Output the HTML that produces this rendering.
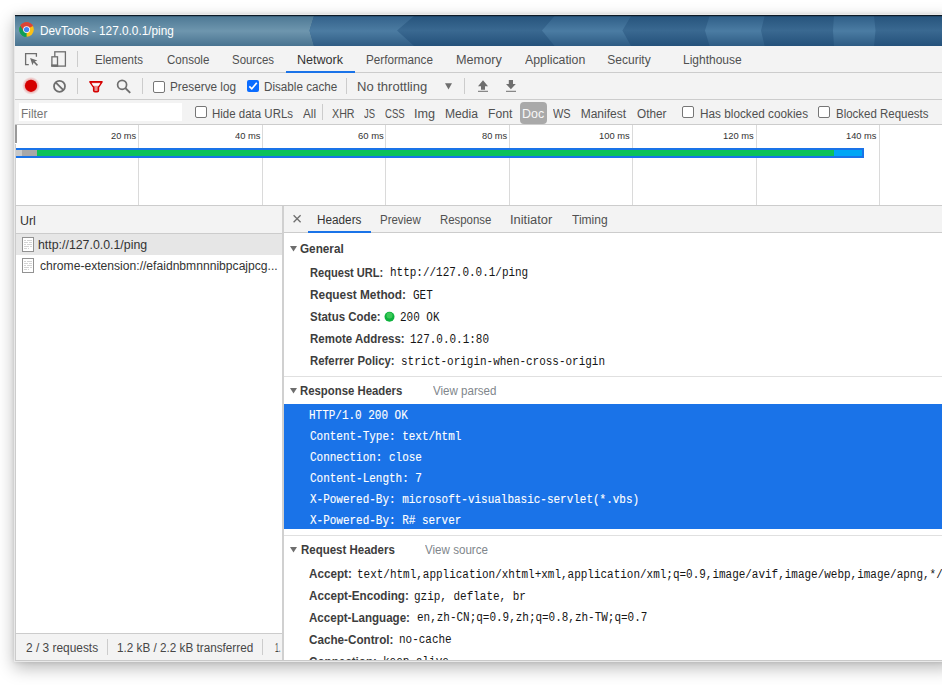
<!DOCTYPE html>
<html><head><meta charset="utf-8">
<style>
html,body{margin:0;padding:0}
body{width:942px;height:685px;overflow:hidden;background:#fff;position:relative;font-family:"Liberation Sans",sans-serif}
.a{position:absolute}
.t{position:absolute;white-space:pre;line-height:normal;transform-origin:0 0}
.hl{position:absolute;height:1px;background:#cccccc}
.vl{position:absolute;width:1px;background:#cccccc}
.cb{position:absolute;width:10px;height:10px;border:1px solid #767676;border-radius:2px;background:#fff}
</style></head><body>
<!-- window shadow -->
<div class="a" style="left:14px;top:14px;width:940px;height:648px;background:#e9e9e9;box-shadow:0 6px 16px rgba(0,0,0,0.28),0 0 4px rgba(0,0,0,0.12)"></div>
<!-- title bar -->
<svg class="a" style="left:15px;top:15px" width="927" height="31" viewBox="15 15 927 31">
<defs>
<linearGradient id="gL" x1="0" y1="0" x2="0" y2="1"><stop offset="0" stop-color="#4d7894"/><stop offset="0.5" stop-color="#6e96ae"/><stop offset="1" stop-color="#497390"/></linearGradient>
<linearGradient id="gM" x1="0" y1="0" x2="0" y2="1"><stop offset="0" stop-color="#33618a"/><stop offset="0.5" stop-color="#4c7ca2"/><stop offset="1" stop-color="#2f5c84"/></linearGradient>
<linearGradient id="gD" x1="0" y1="0" x2="0" y2="1"><stop offset="0" stop-color="#25527b"/><stop offset="0.5" stop-color="#3a6991"/><stop offset="1" stop-color="#24517a"/></linearGradient>
<linearGradient id="gB" x1="0" y1="0" x2="0" y2="1"><stop offset="0" stop-color="#2f5e87"/><stop offset="0.5" stop-color="#4b7ca3"/><stop offset="1" stop-color="#2d5b83"/></linearGradient>
</defs>
<rect x="15" y="15" width="927" height="31" fill="url(#gD)"/>
<polygon points="15,16 314,16 309.5,30.5 314,46 15,46" fill="url(#gL)"/>
<polygon points="314,16 414,16 397,30.5 414,46 314,46 309.5,30.5" fill="url(#gM)"/>
<polygon points="554.6,16 631,16 622.4,30.5 631,46 554.6,46 542,30.5" fill="url(#gB)"/>
<polygon points="709.6,16 764.6,16 761,30.5 764.6,46 709.6,46 705,30.5" fill="url(#gB)"/>
<polygon points="834,16 874,16 875.5,30.5 874,46 834,46 833,30.5" fill="url(#gB)"/>
<rect x="15" y="15" width="927" height="1.2" fill="#0d1a26"/>
<!-- chrome icon -->
<g transform="translate(26.6,29.6) scale(0.95)">
<circle r="7.6" fill="#fbc116"/>
<path d="M0,0 L-6.6,-3.8 A7.6,7.6 0 0 1 6.6,-3.8 Z" fill="#db4437"/>
<path d="M0,0 L-6.6,-3.8 A7.6,7.6 0 0 0 0,7.6 Z" fill="#0f9d58"/>
<path d="M0,0 L6.6,-3.8 L3.3,-1.9 Z" fill="#db4437"/>
<path d="M-6.6,-3.8 L-3.3,1.9 L0,-3.5 L6.6,-3.8 A7.6,7.6 0 0 0 -6.6,-3.8Z" fill="#db4437"/>
<path d="M-6.6,-3.8 L-1.7,4.8 L0,7.6 A7.6,7.6 0 0 1 -6.6,-3.8Z" fill="#0f9d58"/>
<circle r="3.6" fill="#fff"/>
<circle r="2.8" fill="#4285f4"/>
</g>
</svg>
<!-- toolbar background -->
<div class="a" style="left:15px;top:46px;width:927px;height:79px;background:#f3f3f3"></div>
<div class="hl" style="left:15px;top:72px;width:927px"></div>
<div class="hl" style="left:15px;top:99px;width:927px"></div>
<div class="hl" style="left:15px;top:124px;width:927px"></div>
<!-- network tab underline -->
<div class="a" style="left:286px;top:71px;width:69px;height:2px;background:#1a73e8"></div>
<!-- separators -->
<div class="vl" style="left:77px;top:51px;height:16px"></div>
<div class="vl" style="left:77px;top:78px;height:16px"></div>
<div class="vl" style="left:142px;top:78px;height:16px"></div>
<div class="vl" style="left:346px;top:78px;height:16px"></div>
<div class="vl" style="left:464px;top:78px;height:16px"></div>
<div class="vl" style="left:322px;top:104px;height:16px"></div>
<!-- icons row1 -->
<svg class="a" style="left:15px;top:46px" width="70" height="26" viewBox="15 46 70 26">
<path d="M28.8,64.6 H25.6 V53.6 H36.4 V56.8" fill="none" stroke="#6e6e6e" stroke-width="1.3"/>
<path d="M30.1,58.1 L37.3,60.4 L34.8,61.5 L38,64.8 L36.9,65.9 L33.6,62.6 L32.5,65.2 Z" fill="#6e6e6e"/>
<rect x="54.8" y="51.8" width="10.6" height="14.3" fill="none" stroke="#6e6e6e" stroke-width="1.3"/>
<rect x="51.9" y="56.8" width="5.6" height="9.3" fill="#f3f3f3" stroke="#6e6e6e" stroke-width="1.3"/>
<rect x="51.3" y="64.4" width="6.8" height="2.2" fill="#6e6e6e"/>
</svg>
<!-- icons row2 -->
<svg class="a" style="left:15px;top:73px" width="510" height="26" viewBox="15 73 510 26">
<defs><radialGradient id="glow"><stop offset="0.6" stop-color="#d50000" stop-opacity="0.35"/><stop offset="1" stop-color="#d50000" stop-opacity="0"/></radialGradient></defs><circle cx="31" cy="85.8" r="9" fill="url(#glow)"/>
<circle cx="31" cy="85.8" r="6.1" fill="#d50000"/>
<circle cx="59.5" cy="86.3" r="5.5" fill="none" stroke="#6e6e6e" stroke-width="1.8"/>
<path d="M55.6,82.4 L63.4,90.2" stroke="#6e6e6e" stroke-width="1.8"/>
<path d="M89.9,81.9 H102 L98.4,87.4 V90.6 Q98.4,91.8 97.2,91.8 H94.9 Q93.7,91.8 93.7,90.6 V87.4 Z" fill="#e89090" stroke="#d50000" stroke-width="1.6" stroke-linejoin="round"/>
<path d="M91.6,83.2 H100.3 L98.6,85.8 H93.3Z" fill="#fff"/>
<circle cx="122.1" cy="84.8" r="4.5" fill="none" stroke="#6e6e6e" stroke-width="1.7"/>
<path d="M125.4,88.1 L130.2,92.9" stroke="#6e6e6e" stroke-width="2"/>
<path d="M445,83.2 H452 L448.5,89.6Z" fill="#6e6e6e"/>
<path d="M483,80.2 L488,86.2 H485 V89.7 H481 V86.2 H478Z" fill="#6e6e6e"/>
<rect x="478" y="90.8" width="10" height="1" fill="#6e6e6e"/>
<path d="M508.8,80 H513 V84 H515.8 L510.9,89.2 L506,84 H508.8Z" fill="#6e6e6e"/>
<rect x="506" y="90.8" width="10" height="1" fill="#6e6e6e"/>
</svg>
<!-- checkboxes row2 -->
<div class="cb" style="left:153px;top:81px"></div>
<div class="a" style="left:247px;top:80px;width:12px;height:12px;border-radius:2px;background:#0b6cff"></div>
<svg class="a" style="left:247px;top:80px" width="12" height="12"><path d="M2.3,6.3 L4.8,8.8 L9.8,2.8" fill="none" stroke="#fff" stroke-width="1.7"/></svg>
<!-- filter row -->
<div class="a" style="left:19px;top:103px;width:163px;height:18px;background:#fff"></div>
<div class="cb" style="left:195px;top:106px"></div>
<div class="cb" style="left:682px;top:106px"></div>
<div class="cb" style="left:818px;top:106px"></div>
<div class="a" style="left:520px;top:102px;width:27px;height:22px;border-radius:4px;background:#a9a9a9"></div>
<!-- timeline -->
<div class="a" style="left:15px;top:125px;width:927px;height:80px;background:#fff"></div>
<div class="vl" style="left:138px;top:125px;height:80px;background:#dadada"></div>
<div class="vl" style="left:262px;top:125px;height:80px;background:#dadada"></div>
<div class="vl" style="left:385px;top:125px;height:80px;background:#dadada"></div>
<div class="vl" style="left:509px;top:125px;height:80px;background:#dadada"></div>
<div class="vl" style="left:632px;top:125px;height:80px;background:#dadada"></div>
<div class="vl" style="left:756px;top:125px;height:80px;background:#dadada"></div>
<div class="vl" style="left:879px;top:125px;height:80px;background:#dadada"></div>
<div class="a" style="left:15px;top:125px;width:2px;height:18px;background:#9a9a9a"></div>
<div class="a" style="left:15px;top:144px;width:1px;height:61px;background:#cfcfcf"></div>
<!-- waterfall bar -->
<div class="a" style="left:16px;top:148px;width:848px;height:10px;background:#1a73e8"></div>
<div class="a" style="left:16px;top:150px;width:6px;height:6px;background:#c8c8c8"></div>
<div class="a" style="left:22px;top:150px;width:15px;height:6px;background:#a8a8a8"></div>
<div class="a" style="left:37px;top:150px;width:797px;height:6px;background:#0cc15a"></div>
<div class="a" style="left:834px;top:150px;width:28px;height:6px;background:#00a6f5"></div>
<div class="hl" style="left:15px;top:205px;width:927px"></div>
<!-- lower area -->
<div class="a" style="left:15px;top:206px;width:927px;height:454px;background:#fff"></div>
<!-- left panel -->
<div class="a" style="left:15px;top:206px;width:267px;height:27px;background:#f3f3f3"></div>
<div class="hl" style="left:15px;top:233px;width:267px"></div>
<div class="a" style="left:15px;top:234px;width:267px;height:21px;background:#e6e6e6"></div>
<svg class="a" style="left:15px;top:234px" width="30" height="42" viewBox="15 234 30 42">
<g fill="#fff" stroke="#929292" stroke-width="1"><rect x="22.5" y="237.5" width="11" height="14"/><rect x="22.5" y="258.5" width="11" height="14"/></g>
<g fill="#d4d4d4"><rect x="24" y="240" width="2" height="1"/><rect x="27" y="240" width="5" height="1"/><rect x="24" y="242" width="4" height="1"/><rect x="29" y="242" width="3" height="1"/><rect x="24" y="244" width="2" height="1"/><rect x="27" y="244" width="5" height="1"/><rect x="24" y="246" width="5" height="1"/><rect x="30" y="246" width="2" height="1"/><rect x="24" y="248" width="3" height="1"/><rect x="28" y="248" width="1" height="1"/><rect x="24" y="261" width="2" height="1"/><rect x="27" y="261" width="5" height="1"/><rect x="24" y="263" width="4" height="1"/><rect x="29" y="263" width="3" height="1"/><rect x="24" y="265" width="2" height="1"/><rect x="27" y="265" width="5" height="1"/><rect x="24" y="267" width="5" height="1"/><rect x="30" y="267" width="2" height="1"/><rect x="24" y="269" width="3" height="1"/><rect x="28" y="269" width="1" height="1"/></g>
</svg>
<div class="a" style="left:15px;top:633px;width:267px;height:27px;background:#f3f3f3"></div>
<div class="hl" style="left:15px;top:633px;width:267px"></div>
<div class="vl" style="left:107px;top:639px;height:16px"></div>
<div class="vl" style="left:262px;top:639px;height:16px"></div>
<!-- divider -->
<div class="a" style="left:282px;top:206px;width:2px;height:455px;background:#d0d0d0"></div>
<div class="a" style="left:15px;top:206px;width:1px;height:455px;background:#cccccc"></div>
<!-- right panel -->
<div class="a" style="left:284px;top:206px;width:658px;height:26px;background:#f3f3f3"></div>
<div class="hl" style="left:284px;top:232px;width:658px"></div>
<div class="a" style="left:308px;top:231px;width:63px;height:2px;background:#1a73e8"></div>
<svg class="a" style="left:284px;top:206px" width="30" height="26" viewBox="284 206 30 26"><path d="M293.6,215.2 L300.6,222.2 M300.6,215.2 L293.6,222.2" stroke="#6e6e6e" stroke-width="1.3"/></svg>
<svg class="a" style="left:284px;top:233px" width="20" height="330" viewBox="284 233 20 330">
<path d="M290,246 H297 L293.5,251.5Z" fill="#6e6e6e"/>
<path d="M290,388 H297 L293.5,393.5Z" fill="#6e6e6e"/>
<path d="M290,547 H297 L293.5,552.5Z" fill="#6e6e6e"/>
</svg>
<svg class="a" style="left:384px;top:311px" width="12" height="12"><circle cx="5.5" cy="5.7" r="5" fill="#0eb23d"/><circle cx="5.5" cy="4.5" r="3" fill="#5bd86a" opacity="0.6"/></svg>
<div class="hl" style="left:284px;top:376px;width:658px;background:#e0e0e0"></div>
<div class="a" style="left:284px;top:404px;width:658px;height:125px;background:#1a73e8"></div>
<div class="hl" style="left:284px;top:535px;width:658px;background:#e0e0e0"></div>
<div class="a" style="left:15px;top:15px;width:927px;height:645px;overflow:hidden"><div class="a" style="left:-15px;top:-15px"><div class="t" style="left:39.52px;top:23.90px;font:normal 12px 'Liberation Sans', sans-serif;color:#fff;transform:scale(0.9837,1.000)">DevTools - 127.0.0.1/ping</div>
<div class="t" style="left:95.34px;top:53.00px;font:normal 12px 'Liberation Sans', sans-serif;color:#505050;transform:scale(0.9571,1.000)">Elements</div>
<div class="t" style="left:166.70px;top:53.00px;font:normal 12px 'Liberation Sans', sans-serif;color:#505050;transform:scale(0.9614,1.000)">Console</div>
<div class="t" style="left:231.75px;top:53.00px;font:normal 12px 'Liberation Sans', sans-serif;color:#505050;transform:scale(0.9535,1.000)">Sources</div>
<div class="t" style="left:296.65px;top:53.00px;font:normal 12px 'Liberation Sans', sans-serif;color:#333;transform:scale(1.0465,1.000)">Network</div>
<div class="t" style="left:365.72px;top:53.00px;font:normal 12px 'Liberation Sans', sans-serif;color:#505050;transform:scale(0.9750,1.000)">Performance</div>
<div class="t" style="left:455.65px;top:53.00px;font:normal 12px 'Liberation Sans', sans-serif;color:#505050;transform:scale(1.0548,1.000)">Memory</div>
<div class="t" style="left:524.70px;top:53.00px;font:normal 12px 'Liberation Sans', sans-serif;color:#505050;transform:scale(1.0276,1.000)">Application</div>
<div class="t" style="left:607.30px;top:53.00px;font:normal 12px 'Liberation Sans', sans-serif;color:#505050;transform:scale(1.0000,1.000)">Security</div>
<div class="t" style="left:683.00px;top:53.00px;font:normal 12px 'Liberation Sans', sans-serif;color:#505050;transform:scale(1.0000,1.000)">Lighthouse</div>
<div class="t" style="left:170.02px;top:80.00px;font:normal 12px 'Liberation Sans', sans-serif;color:#505050;transform:scale(0.9803,1.000)">Preserve log</div>
<div class="t" style="left:264.03px;top:80.00px;font:normal 12px 'Liberation Sans', sans-serif;color:#505050;transform:scale(0.9730,1.000)">Disable cache</div>
<div class="t" style="left:356.62px;top:80.00px;font:normal 12px 'Liberation Sans', sans-serif;color:#505050;transform:scale(1.0841,1.000)">No throttling</div>
<div class="t" style="left:21.41px;top:107.00px;font:normal 12px 'Liberation Sans', sans-serif;color:#757575;transform:scale(0.9885,1.000)">Filter</div>
<div class="t" style="left:212.34px;top:107.00px;font:normal 12px 'Liberation Sans', sans-serif;color:#505050;transform:scale(0.9571,1.000)">Hide data URLs</div>
<div class="t" style="left:303.30px;top:107.00px;font:normal 12px 'Liberation Sans', sans-serif;color:#505050;transform:scale(0.9769,1.000)">All</div>
<div class="t" style="left:331.70px;top:107.00px;font:normal 12px 'Liberation Sans', sans-serif;color:#505050;transform:scale(0.8920,1.000)">XHR</div>
<div class="t" style="left:364.00px;top:107.00px;font:normal 12px 'Liberation Sans', sans-serif;color:#505050;transform:scale(0.7857,1.000)">JS</div>
<div class="t" style="left:385.00px;top:107.00px;font:normal 12px 'Liberation Sans', sans-serif;color:#505050;transform:scale(0.8000,1.000)">CSS</div>
<div class="t" style="left:413.95px;top:107.00px;font:normal 12px 'Liberation Sans', sans-serif;color:#505050;transform:scale(1.0526,1.000)">Img</div>
<div class="t" style="left:444.99px;top:107.00px;font:normal 12px 'Liberation Sans', sans-serif;color:#505050;transform:scale(1.0094,1.000)">Media</div>
<div class="t" style="left:487.99px;top:107.00px;font:normal 12px 'Liberation Sans', sans-serif;color:#505050;transform:scale(1.0130,1.000)">Font</div>
<div class="t" style="left:553.30px;top:107.00px;font:normal 12px 'Liberation Sans', sans-serif;color:#505050;transform:scale(0.9158,1.000)">WS</div>
<div class="t" style="left:580.70px;top:107.00px;font:normal 12px 'Liberation Sans', sans-serif;color:#505050;transform:scale(1.0000,1.000)">Manifest</div>
<div class="t" style="left:637.30px;top:107.00px;font:normal 12px 'Liberation Sans', sans-serif;color:#505050;transform:scale(0.9800,1.000)">Other</div>
<div class="t" style="left:699.72px;top:107.00px;font:normal 12px 'Liberation Sans', sans-serif;color:#505050;transform:scale(0.9817,1.000)">Has blocked cookies</div>
<div class="t" style="left:835.94px;top:107.00px;font:normal 12px 'Liberation Sans', sans-serif;color:#505050;transform:scale(0.9563,1.000)">Blocked Requests</div>
<div class="t" style="left:522.26px;top:107.00px;font:normal 12px 'Liberation Sans', sans-serif;color:#f8f8f8;transform:scale(1.0350,1.000)">Doc</div>
<div class="t" style="left:111.00px;top:130.90px;font:normal 10px 'Liberation Sans', sans-serif;color:#333;transform:scale(0.9259,0.900)">20 ms</div>
<div class="t" style="left:234.70px;top:130.90px;font:normal 10px 'Liberation Sans', sans-serif;color:#333;transform:scale(0.9370,0.900)">40 ms</div>
<div class="t" style="left:357.70px;top:130.90px;font:normal 10px 'Liberation Sans', sans-serif;color:#333;transform:scale(0.9481,0.900)">60 ms</div>
<div class="t" style="left:481.70px;top:130.90px;font:normal 10px 'Liberation Sans', sans-serif;color:#333;transform:scale(0.9259,0.900)">80 ms</div>
<div class="t" style="left:599.06px;top:130.90px;font:normal 10px 'Liberation Sans', sans-serif;color:#333;transform:scale(0.9375,0.900)">100 ms</div>
<div class="t" style="left:723.06px;top:130.90px;font:normal 10px 'Liberation Sans', sans-serif;color:#333;transform:scale(0.9375,0.900)">120 ms</div>
<div class="t" style="left:846.07px;top:130.90px;font:normal 10px 'Liberation Sans', sans-serif;color:#333;transform:scale(0.9281,0.900)">140 ms</div>
<div class="t" style="left:19.76px;top:214.00px;font:normal 12px 'Liberation Sans', sans-serif;color:#333;transform:scale(1.0357,1.000)">Url</div>
<div class="t" style="left:38.47px;top:238.00px;font:normal 12px 'Liberation Sans', sans-serif;color:#333;transform:scale(1.0286,1.000)">http://127.0.0.1/ping</div>
<div class="t" style="left:39.50px;top:259.00px;font:normal 12px 'Liberation Sans', sans-serif;color:#333;transform:scale(1.0094,1.000)">chrome-extension://efaidnbmnnnibpcajpcg...</div>
<div class="t" style="left:26.00px;top:641.00px;font:normal 12px 'Liberation Sans', sans-serif;color:#474747;transform:scale(0.9918,1.000)">2 / 3 requests</div>
<div class="t" style="left:116.82px;top:641.00px;font:normal 12px 'Liberation Sans', sans-serif;color:#474747;transform:scale(0.9768,1.000)">1.2 kB / 2.2 kB transferred</div>
<div class="a" style="left:15px;top:633px;width:266px;height:27px;overflow:hidden"><div class="a" style="left:-15px;top:-633px"><div class="t" style="left:274.94px;top:641.00px;font:normal 12px 'Liberation Sans', sans-serif;color:#474747;transform:scale(0.5625,1.000)">1.</div></div></div>
<div class="t" style="left:317.02px;top:213.30px;font:normal 12px 'Liberation Sans', sans-serif;color:#333;transform:scale(0.9795,1.000)">Headers</div>
<div class="t" style="left:380.15px;top:213.30px;font:normal 12px 'Liberation Sans', sans-serif;color:#505050;transform:scale(0.9548,1.000)">Preview</div>
<div class="t" style="left:439.85px;top:213.30px;font:normal 12px 'Liberation Sans', sans-serif;color:#505050;transform:scale(0.9491,1.000)">Response</div>
<div class="t" style="left:509.73px;top:213.30px;font:normal 12px 'Liberation Sans', sans-serif;color:#505050;transform:scale(1.0737,1.000)">Initiator</div>
<div class="t" style="left:572.00px;top:213.30px;font:normal 12px 'Liberation Sans', sans-serif;color:#505050;transform:scale(1.0029,1.000)">Timing</div>
<div class="t" style="left:300.00px;top:242.30px;font:bold 12px 'Liberation Sans', sans-serif;color:#3d3d3d;transform:scale(0.9773,1.000)">General</div>
<div class="t" style="left:310.00px;top:265.70px;font:bold 12px 'Liberation Sans', sans-serif;color:#3d3d3d;transform:scale(0.9241,1.000)">Request URL:</div>
<div class="t" style="left:389.69px;top:266.40px;font:normal 12px 'Liberation Mono', monospace;color:#151515;transform:scale(0.9139,1.000)">http://127.0.0.1/ping</div>
<div class="t" style="left:310.00px;top:288.30px;font:bold 12px 'Liberation Sans', sans-serif;color:#3d3d3d;transform:scale(0.9866,1.000)">Request Method:</div>
<div class="t" style="left:412.90px;top:289.00px;font:normal 12px 'Liberation Mono', monospace;color:#151515;transform:scale(0.9139,1.000)">GET</div>
<div class="t" style="left:310.00px;top:310.20px;font:bold 12px 'Liberation Sans', sans-serif;color:#3d3d3d;transform:scale(0.9548,1.000)">Status Code:</div>
<div class="t" style="left:399.79px;top:310.90px;font:normal 12px 'Liberation Mono', monospace;color:#151515;transform:scale(0.9139,1.000)">200 OK</div>
<div class="t" style="left:310.00px;top:332.40px;font:bold 12px 'Liberation Sans', sans-serif;color:#3d3d3d;transform:scale(0.9571,1.000)">Remote Address:</div>
<div class="t" style="left:410.39px;top:333.10px;font:normal 12px 'Liberation Mono', monospace;color:#151515;transform:scale(0.9139,1.000)">127.0.0.1:80</div>
<div class="t" style="left:310.00px;top:354.40px;font:bold 12px 'Liberation Sans', sans-serif;color:#3d3d3d;transform:scale(0.9472,1.000)">Referrer Policy:</div>
<div class="t" style="left:401.29px;top:355.10px;font:normal 12px 'Liberation Mono', monospace;color:#151515;transform:scale(0.9139,1.000)">strict-origin-when-cross-origin</div>
<div class="t" style="left:300.40px;top:384.30px;font:bold 12px 'Liberation Sans', sans-serif;color:#3d3d3d;transform:scale(0.9472,1.000)">Response Headers</div>
<div class="t" style="left:433.00px;top:384.30px;font:normal 12px 'Liberation Sans', sans-serif;color:#80868b;transform:scale(0.9636,1.000)">View parsed</div>
<div class="t" style="left:308.99px;top:408.50px;font:normal 12px 'Liberation Mono', monospace;color:#fff;transform:scale(0.9139,1.000);-webkit-text-stroke:0.12px #fff">HTTP/1.0 200 OK</div>
<div class="t" style="left:309.90px;top:429.50px;font:normal 12px 'Liberation Mono', monospace;color:#fff;transform:scale(0.9139,1.000);-webkit-text-stroke:0.12px #fff">Content-Type: text/html</div>
<div class="t" style="left:309.90px;top:450.50px;font:normal 12px 'Liberation Mono', monospace;color:#fff;transform:scale(0.9139,1.000);-webkit-text-stroke:0.12px #fff">Connection: close</div>
<div class="t" style="left:309.90px;top:471.50px;font:normal 12px 'Liberation Mono', monospace;color:#fff;transform:scale(0.9139,1.000);-webkit-text-stroke:0.12px #fff">Content-Length: 7</div>
<div class="t" style="left:309.90px;top:492.50px;font:normal 12px 'Liberation Mono', monospace;color:#fff;transform:scale(0.9139,1.000);-webkit-text-stroke:0.12px #fff">X-Powered-By: microsoft-visualbasic-servlet(*.vbs)</div>
<div class="t" style="left:309.90px;top:513.50px;font:normal 12px 'Liberation Mono', monospace;color:#fff;transform:scale(0.9139,1.000);-webkit-text-stroke:0.12px #fff">X-Powered-By: R# server</div>
<div class="t" style="left:300.60px;top:543.30px;font:bold 12px 'Liberation Sans', sans-serif;color:#3d3d3d;transform:scale(0.9571,1.000)">Request Headers</div>
<div class="t" style="left:425.00px;top:543.30px;font:normal 12px 'Liberation Sans', sans-serif;color:#80868b;transform:scale(0.9662,1.000)">View source</div>
<div class="t" style="left:309.00px;top:566.90px;font:bold 12px 'Liberation Sans', sans-serif;color:#3d3d3d;transform:scale(0.9721,1.000)">Accept:</div>
<div class="t" style="left:357.49px;top:567.60px;font:normal 12px 'Liberation Mono', monospace;color:#151515;transform:scale(0.9139,1.000)">text/html,application/xhtml+xml,application/xml;q=0.9,image/avif,image/webp,image/apng,*/*;q=0.8</div>
<div class="t" style="left:309.00px;top:588.80px;font:bold 12px 'Liberation Sans', sans-serif;color:#3d3d3d;transform:scale(0.9725,1.000)">Accept-Encoding:</div>
<div class="t" style="left:414.09px;top:589.50px;font:normal 12px 'Liberation Mono', monospace;color:#151515;transform:scale(0.9139,1.000)">gzip, deflate, br</div>
<div class="t" style="left:309.00px;top:610.70px;font:bold 12px 'Liberation Sans', sans-serif;color:#3d3d3d;transform:scale(0.9644,1.000)">Accept-Language:</div>
<div class="t" style="left:416.80px;top:611.40px;font:normal 12px 'Liberation Mono', monospace;color:#151515;transform:scale(0.9139,1.000)">en,zh-CN;q=0.9,zh;q=0.8,zh-TW;q=0.7</div>
<div class="t" style="left:309.00px;top:632.70px;font:bold 12px 'Liberation Sans', sans-serif;color:#3d3d3d;transform:scale(0.9744,1.000)">Cache-Control:</div>
<div class="t" style="left:399.09px;top:633.40px;font:normal 12px 'Liberation Mono', monospace;color:#151515;transform:scale(0.9139,1.000)">no-cache</div>
<div class="t" style="left:309.00px;top:654.70px;font:bold 12px 'Liberation Sans', sans-serif;color:#3d3d3d;transform:scale(0.9710,1.000)">Connection:</div>
<div class="t" style="left:382.69px;top:655.40px;font:normal 12px 'Liberation Mono', monospace;color:#151515;transform:scale(0.9139,1.000)">keep-alive</div></div></div>
<!-- window bottom border -->
<div class="a" style="left:15px;top:660px;width:927px;height:1px;background:#cacaca"></div>
</body></html>
